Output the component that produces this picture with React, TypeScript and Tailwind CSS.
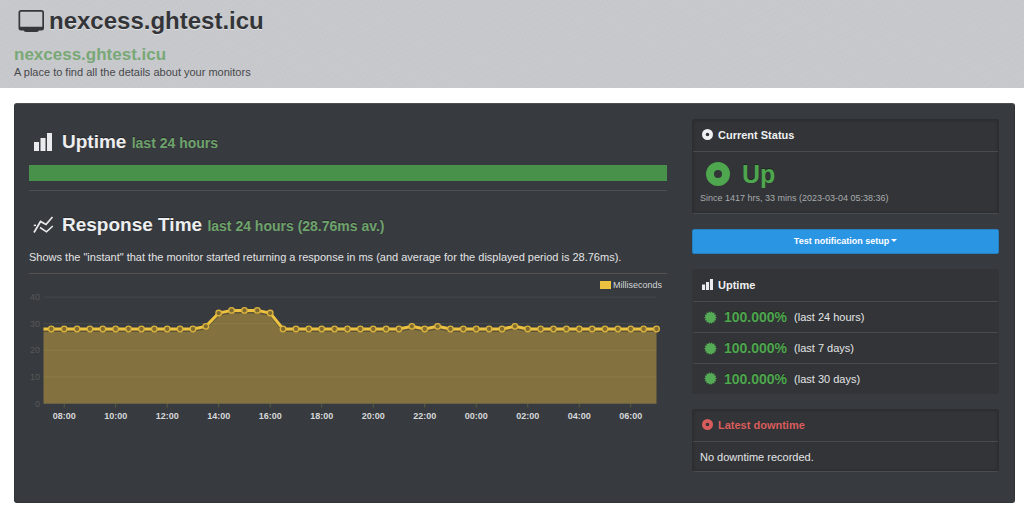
import type { ReactNode } from "react";

const POINTS = Array.from({ length: 48 }, () => 28);
POINTS[12] = 29;
POINTS[13] = 34;
POINTS[14] = 35;
POINTS[15] = 35;
POINTS[16] = 35;
POINTS[17] = 34;
POINTS[28] = 29;
POINTS[30] = 29;
POINTS[36] = 29;

const HOURS = ["08:00", "10:00", "12:00", "14:00", "16:00", "18:00", "20:00", "22:00", "00:00", "02:00", "04:00", "06:00"];

const UPTIMES = [
  { value: "100.000%", period: "(last 24 hours)" },
  { value: "100.000%", period: "(last 7 days)" },
  { value: "100.000%", period: "(last 30 days)" },
];

// chart geometry, in viewBox units
const LEFT = 14.5;
const RIGHT = 627.5;
const BASE = 112.5;
const px = (i: number) => 22.3 + i * 12.877;
const py = (v: number) => BASE - v * 2.66;

function MonitorIcon() {
  return (
    <svg viewBox="0 0 27 23" className="h-[23px] w-[27px]" aria-hidden="true">
      <path
        fill="#35373a"
        fillRule="evenodd"
        d="M3 0h20.500a2.500 2.500 0 0 1 2.500 2.500v15.500a2.500 2.500 0 0 1-2.500 2.500H3a2.500 2.500 0 0 1-2.500-2.500v-15.500A2.500 2.500 0 0 1 3 0zM3 1.800a.8.8 0 0 0-.8.8v14.200h22.100V2.600a.8.8 0 0 0-.8-.8z"
      />
      <path fill="#35373a" d="M6 20h14.500l.5.700q-1 1.400-2.800 1.400H8.500q-1.800 0-3-1.400z" />
    </svg>
  );
}

function BarsIcon({ className }: { className: string }) {
  return (
    <svg viewBox="0 0 18 18" className={className} fill="#e9ebec" aria-hidden="true">
      <path d="M0 9h5v9H0zM6.500 5h5v13h-5zM13 0h5v18h-5z" />
    </svg>
  );
}

function LinesIcon() {
  return (
    <svg viewBox="0 0 21 18" className="h-[18px] w-[21px]" fill="none" stroke="#e9ebec" strokeWidth="1.700" aria-hidden="true">
      <path d="M1 16.500 7.500 5.500l5.500 3L19.500 1" />
      <path d="M.8 9.500 3 9.200M7 11.500 13.500 15.800 19.800 10" strokeWidth="1.600" />
    </svg>
  );
}

function DotIcon({ className }: { className: string }) {
  return (
    <svg viewBox="0 0 24 24" className={className} aria-hidden="true">
      <circle cx="12" cy="12" r="8" fill="none" stroke="currentColor" strokeWidth="8" />
    </svg>
  );
}

function BurstIcon() {
  const pts = Array.from({ length: 28 }, (_, i) => {
    const r = i % 2 ? 9 : 12;
    const a = (i * Math.PI) / 14;
    return `${12 + r * Math.cos(a)},${12 + r * Math.sin(a)}`;
  }).join(" ");
  return (
    <svg viewBox="0 0 24 24" className="h-[13px] w-[13px]" aria-hidden="true">
      <polygon points={pts} fill="#55aa55" />
    </svg>
  );
}

function Card({ title, icon, danger, flat, children }: { title: string; icon: ReactNode; danger?: boolean; flat?: boolean; children: ReactNode }) {
  return (
    <section
      className={
        flat
          ? "rounded-[3px] border border-[#323437] bg-[#323437]"
          : "rounded-[3px] border border-[#2b2d30] border-b-[#484b4f] bg-[#323437] shadow-[inset_0_0_3px_#26282a]"
      }
    >
      <div className="flex h-8 items-center gap-[5px] border-b border-[#484b4e] pb-[2px] pl-[9px]">
        {icon}
        <h2 className={danger ? "text-[11px] font-bold text-[#d95c5c]" : "text-[11px] font-bold text-[#eff0f1]"}>{title}</h2>
      </div>
      {children}
    </section>
  );
}

function ResponseChart() {
  const line = POINTS.map((v, i) => `${px(i)},${py(v)}`).join(" ");
  return (
    <svg viewBox="0 2 638 132" className="block w-full font-['Liberation_Sans',Arial,sans-serif]" role="img" aria-label="Response time in milliseconds">
      {[0, 10, 20, 30, 40].map((v) => (
        <line key={v} x1={LEFT} x2={RIGHT} y1={py(v)} y2={py(v)} stroke="#464a4b" />
      ))}
      {[0, 10, 20, 30, 40].map((v) => (
        <text key={v} x="11" y={py(v) + 3} textAnchor="end" fontSize="9" fill="#55585b">{v}</text>
      ))}
      {HOURS.map((h, i) => (
        <g key={h}>
          <line x1={px(1 + i * 4)} x2={px(1 + i * 4)} y1={BASE} y2={BASE + 4} stroke="#5e5b44" />
          <text x={px(1 + i * 4)} y={BASE + 15} textAnchor="middle" fontSize="9" fontWeight="bold" fill="#d6d8da">{h}</text>
        </g>
      ))}
      <polygon points={`${LEFT},${BASE} ${LEFT},${py(28)} ${line} ${RIGHT},${BASE}`} fill="#edc240" fillOpacity="0.42" />
      <polyline points={`${LEFT},${py(28)} ${line}`} fill="none" stroke="#2c2d2e" strokeOpacity="0.4" strokeWidth="2" transform="translate(0 2)" />
      <polyline points={`${LEFT},${py(28)} ${line}`} fill="none" stroke="#edc240" strokeWidth="3" />
      {POINTS.map((v, i) => (
        <circle key={i} cx={px(i)} cy={py(v)} r="2.800" fill="#7d6a32" stroke="#dcb43d" strokeWidth="1.300" />
      ))}
    </svg>
  );
}

export default function App() {
  return (
    <div className="min-h-screen bg-white pb-[10px] font-['Liberation_Sans',Arial,sans-serif] text-[11px] leading-4">
      <header className="h-[88px] bg-[#c8c9cd] bg-[repeating-linear-gradient(63deg,#c4c5c966_0_1px,transparent_1px_4px),repeating-linear-gradient(152deg,#c3c4c866_0_1px,transparent_1px_5px)] pl-[14px] pt-2">
        <div className="flex h-[26px] items-center gap-1 pl-1">
          <MonitorIcon />
          <h1 className="text-[24px] font-bold leading-[26px] text-[#333538] [text-shadow:0_1px_0_#dfe0e2]">nexcess.ghtest.icu</h1>
        </div>
        <p className="mt-3 text-[17px] font-bold leading-[18px] text-[#79a876]">nexcess.ghtest.icu</p>
        <p className="text-[#46484b]">A place to find all the details about your monitors</p>
      </header>

      <main className="ml-[14px] mr-[9px] mt-[15px] grid grid-cols-[1fr_307px] gap-[25px] rounded-[3px] border border-[#313437] border-t-[#4b4f52] bg-[#373a3e] pb-[30px] pl-[14px] pr-[15px] pt-[15px]">
        <div>
          <div className="flex h-[46px] items-center gap-[10px] pl-[5px]">
            <BarsIcon className="h-[18px] w-[18px]" />
            <h2 className="text-[19px] font-bold leading-6 text-[#edeef0] [text-shadow:0_-1px_0_#26282a]">
              Uptime <small className="text-[14px] text-[#6fa36d]">last 24 hours</small>
            </h2>
          </div>
          <div className="h-4 bg-[#47914b]" />
          <hr className="mt-[9px] border-[#4e4f50]" />

          <div className="mt-[22px] flex h-6 items-center gap-2 pl-1">
            <LinesIcon />
            <h2 className="text-[19px] font-bold leading-6 text-[#edeef0] [text-shadow:0_-1px_0_#26282a]">
              Response Time <small className="text-[14px] text-[#6fa36d]">last 24 hours (28.76ms av.)</small>
            </h2>
          </div>
          <p className="mt-3 text-[#e3e4e6]">
            Shows the "instant" that the monitor started returning a response in ms (and average for the displayed period is 28.76ms).
          </p>
          <hr className="mt-2 border-[#56534f]" />
          <div className="mt-[3px] flex items-center justify-end gap-[2px] pr-[5px] text-[9px] text-[#d3d5d8]">
            <span className="h-2 w-[11px] bg-[#edc240]" />
            Milliseconds
          </div>
          <ResponseChart />
        </div>

        <aside className="flex flex-col gap-[15px]">
          <Card title="Current Status" icon={<DotIcon className="h-[11px] w-[11px] text-[#eff0f1]" />}>
            <div className="h-[61px] px-[7px] pt-2 text-[#a9abae]">
              <div className="flex h-7 items-center gap-3 pl-[6px] text-[#4ea64e]">
                <DotIcon className="h-6 w-6" />
                <span className="text-[25px] font-bold [text-shadow:0_-1px_0_#1d2a1d]">Up</span>
              </div>
              <p className="mt-[2px] text-[9px]">Since 1417 hrs, 33 mins (2023-03-04 05:38:36)</p>
            </div>
          </Card>

          <button type="button" className="flex h-[25px] items-center justify-center gap-[2px] rounded-[2px] border border-[#2680bf] bg-[#2a95e3] pb-[2px] text-[9px] font-bold text-white">
            Test notification setup
            <svg viewBox="0 0 6 3" className="h-[3px] w-[6px]" fill="#fff" aria-hidden="true">
              <path d="M0 0h6L3 3z" />
            </svg>
          </button>

          <Card title="Uptime" flat icon={<BarsIcon className="h-[11px] w-[11px]" />}>
            <ul>
              {UPTIMES.map((u) => (
                <li key={u.period} className="flex h-[31px] items-center gap-[7px] border-b border-[#484b4e] pl-[11px] text-[#e3e4e6] last:h-[29px] last:border-b-0">
                  <BurstIcon />
                  <strong className="text-[14px] text-[#4ea64e] [text-shadow:0_-1px_0_#1d2a1d]">{u.value}</strong>
                  <span>{u.period}</span>
                </li>
              ))}
            </ul>
          </Card>

          <Card title="Latest downtime" danger icon={<DotIcon className="h-[11px] w-[11px] text-[#d95c5c]" />}>
            <p className="px-[7px] pb-[6px] pt-[7px] text-[#e3e4e6]">No downtime recorded.</p>
          </Card>
        </aside>
      </main>
    </div>
  );
}
